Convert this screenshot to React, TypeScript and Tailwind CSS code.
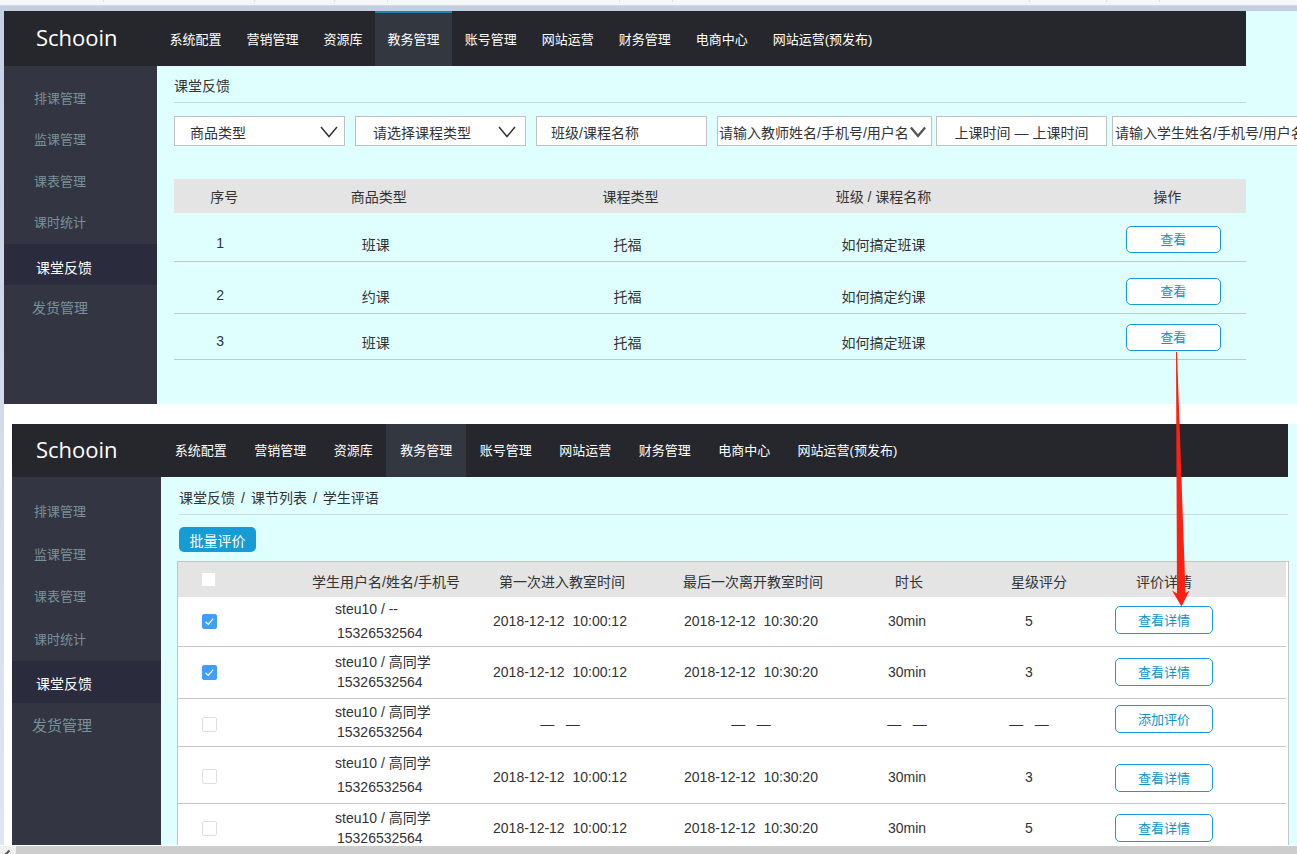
import { ReactNode } from "react";
import clsx from "clsx";

const NAV = [
  "系统配置",
  "营销管理",
  "资源库",
  "教务管理",
  "账号管理",
  "网站运营",
  "财务管理",
  "电商中心",
  "网站运营(预发布)",
];

const MENU = ["排课管理", "监课管理", "课表管理", "课时统计"];

const COURSES = [
  { id: 1, type: "班课", course: "托福", name: "如何搞定班课", height: "h-12" },
  { id: 2, type: "约课", course: "托福", name: "如何搞定约课", height: "h-[52px]" },
  { id: 3, type: "班课", course: "托福", name: "如何搞定班课", height: "h-[46px]" },
];

const EMPTY = "—   —";
const ENTER = "2018-12-12  10:00:12";
const LEAVE = "2018-12-12  10:30:20";

const STUDENTS = [
  { name: "--", checked: true, enter: ENTER, leave: LEAVE, time: "30min", stars: "5", action: "查看详情", size: "h-[49px] leading-6", cell: "", actionCell: "pb-0.5" },
  { name: "高同学", checked: true, enter: ENTER, leave: LEAVE, time: "30min", stars: "3", action: "查看详情", size: "h-[52px] leading-5", cell: "", actionCell: "" },
  { name: "高同学", checked: false, enter: EMPTY, leave: EMPTY, time: EMPTY, stars: EMPTY, action: "添加评价", size: "h-12 leading-5", cell: "pt-1", actionCell: "pb-1.5" },
  { name: "高同学", checked: false, enter: ENTER, leave: LEAVE, time: "30min", stars: "3", action: "查看详情", size: "h-[57px] leading-6", cell: "pt-1", actionCell: "pt-1.5" },
  { name: "高同学", checked: false, enter: ENTER, leave: LEAVE, time: "30min", stars: "5", action: "查看详情", size: "h-[50px] leading-5", cell: "", actionCell: "" },
];

function RulerStrip() {
  return (
    <div className="flex h-[11px] shrink-0 overflow-hidden border-b-[5px] border-[#c3cee0] bg-[#f5f6f8] shadow-[inset_0_-1px_0_#d6d9df]">
      {[104, 151, 80, 53, 232, 53, 357, 77, 53].map((width, i) => (
        <span key={i} className="h-0.5 shrink-0 border-r border-[#dcdee2]" style={{ width }} />
      ))}
    </div>
  );
}

interface HeaderProps {
  className: string;
  logoClass: string;
  navClass: string;
  activeClass: string;
}

function Header({ className, logoClass, navClass, activeClass }: HeaderProps) {
  return (
    <header className={clsx("flex bg-[#26272c] text-white", className)}>
      <div className={clsx("flex shrink-0 items-center pb-1 font-['Open_Sans',sans-serif] text-[22px] leading-none", logoClass)}>
        Schooin
      </div>
      <nav className={clsx("flex text-[13px]", navClass)}>
        {NAV.map((item) => (
          <a
            key={item}
            href="#"
            className={clsx(
              "flex flex-auto items-center justify-center whitespace-nowrap px-3 pt-0.5",
              item === "教务管理" && activeClass
            )}
          >
            {item}
          </a>
        ))}
      </nav>
    </header>
  );
}

interface SidebarProps {
  className: string;
  groupClass: string;
  activeClass: string;
  lastClass: string;
}

function Sidebar({ className, groupClass, activeClass, lastClass }: SidebarProps) {
  return (
    <aside className={clsx("shrink-0 bg-[#333642] text-[#78919a]", className)}>
      <div className={clsx("grid grid-rows-4 text-[13px]", groupClass)}>
        {MENU.map((item) => (
          <a key={item} href="#" className="flex items-center pt-px">
            {item}
          </a>
        ))}
      </div>
      <a href="#" className={clsx("flex items-center bg-[#2a2b3d] text-white", activeClass)}>
        课堂反馈
      </a>
      <a href="#" className={clsx("flex items-center", lastClass)}>
        发货管理
      </a>
    </aside>
  );
}

function Chevron({ className, bold }: { className: string; bold?: boolean }) {
  return (
    <svg
      viewBox="0 0 18 12"
      className={clsx("pointer-events-none absolute", className)}
      fill="none"
      stroke={bold ? "#555" : "#333"}
      strokeWidth={bold ? 2.6 : 1.5}
    >
      <path d="M1 1 L9 10.5 L17 1" />
    </svg>
  );
}

const fieldBox = "relative h-[30px] shrink-0 border border-[#c0c0c0] bg-white";
const fieldInput = "h-full w-full appearance-none bg-transparent pt-1 outline-none placeholder:text-[#333] placeholder:opacity-100";

function Filters() {
  return (
    <form className="mt-[13px] flex overflow-hidden text-sm">
      <div className={clsx(fieldBox, "mr-2.5 w-[171px]")}>
        <select aria-label="商品类型" className={clsx(fieldInput, "pl-[15px]")}>
          <option>商品类型</option>
        </select>
        <Chevron className="right-[6px] top-[9px] h-3 w-[18px]" />
      </div>
      <div className={clsx(fieldBox, "mr-2.5 w-[171px]")}>
        <select aria-label="课程类型" className={clsx(fieldInput, "pl-[17px]")}>
          <option>请选择课程类型</option>
        </select>
        <Chevron className="right-[9px] top-[9px] h-3 w-[18px]" />
      </div>
      <div className={clsx(fieldBox, "mr-2.5 w-[171px]")}>
        <input aria-label="班级/课程名称" placeholder="班级/课程名称" className={clsx(fieldInput, "pl-3.5")} />
      </div>
      <div className={clsx(fieldBox, "mr-1 w-[215px]")}>
        <select aria-label="教师" className={clsx(fieldInput, "pl-px")}>
          <option>请输入教师姓名/手机号/用户名</option>
        </select>
        <Chevron bold className="right-[5px] top-[9px] h-3 w-4" />
      </div>
      <div className={clsx(fieldBox, "mr-[5px] w-[171px]")}>
        <input aria-label="上课时间" placeholder="上课时间 — 上课时间" className={clsx(fieldInput, "text-center")} />
      </div>
      <div className={clsx(fieldBox, "w-[215px]")}>
        <input aria-label="学生" placeholder="请输入学生姓名/手机号/用户名" className={clsx(fieldInput, "pl-0.5")} />
      </div>
    </form>
  );
}

function OutlineButton({ className, children }: { className: string; children: ReactNode }) {
  return (
    <button
      type="button"
      className={clsx("rounded-[5px] border border-[#169bd5] bg-white pt-0.5 text-[13px] text-[#0a96cc]", className)}
    >
      {children}
    </button>
  );
}

function CourseTable() {
  return (
    <table className="mt-[33px] w-full table-fixed text-center text-sm">
      <thead>
        <tr className="h-[34px] bg-[#e4e4e4]">
          <th className="w-[9%] pl-1 pt-0.5 font-normal">序号</th>
          <th className="w-[20%] pl-0.5 pt-0.5 font-normal">商品类型</th>
          <th className="w-[27%] pl-0.5 pt-0.5 font-normal">课程类型</th>
          <th className="w-[20%] pl-1 pt-0.5 font-normal">班级 / 课程名称</th>
          <th className="pl-[100px] pt-0.5 font-normal">操作</th>
        </tr>
      </thead>
      <tbody>
        {COURSES.map((c) => (
          <tr key={c.id} className={clsx("border-b border-[#c4c8c8] align-bottom leading-5", c.height)}>
            <td className="pb-2 pr-1">{c.id}</td>
            <td className="pb-1.5 pr-1">{c.type}</td>
            <td className="pb-1.5 pr-1">{c.course}</td>
            <td className="pb-1.5 pl-1">{c.name}</td>
            <td className="pb-2 pl-28">
              <OutlineButton className="mx-auto block h-[27px] w-[95px]">查看</OutlineButton>
            </td>
          </tr>
        ))}
      </tbody>
    </table>
  );
}

function Tick({ label, defaultChecked }: { label: string; defaultChecked?: boolean }) {
  return (
    <label className="relative block size-[15px]">
      <input
        type="checkbox"
        aria-label={label}
        defaultChecked={defaultChecked}
        className="peer block size-full appearance-none rounded-[2px] border border-[#dedede] bg-white checked:border-[#409eff] checked:bg-[#409eff]"
      />
      <svg
        viewBox="0 0 15 15"
        className="pointer-events-none absolute inset-0 hidden peer-checked:block"
        fill="none"
        stroke="#fff"
        strokeWidth="1.2"
      >
        <path d="M3.5 7.8 L6.2 10.4 L11.2 4.6" />
      </svg>
    </label>
  );
}

function StudentTable() {
  return (
    <div className="mr-2 mt-[9px] border border-[#c4c4c4] bg-white pr-0.5">
      <table className="w-full table-fixed text-center text-sm">
        <thead>
          <tr className="h-[35px] bg-[#e4e4e4]">
            <th className="w-[120px] pl-6">
              <label className="block">
                <input type="checkbox" aria-label="全选" className="block size-[13px] appearance-none bg-white" />
              </label>
            </th>
            <th className="w-44 pt-1 font-normal">学生用户名/姓名/手机号</th>
            <th className="w-44 pt-1 font-normal">第一次进入教室时间</th>
            <th className="w-[206px] pt-1 font-normal">最后一次离开教室时间</th>
            <th className="w-[106px] pt-1 font-normal">时长</th>
            <th className="w-36 pl-2.5 pt-1 font-normal">星级评分</th>
            <th className="pr-16 pt-1 font-normal">评价详情</th>
          </tr>
        </thead>
        <tbody>
          {STUDENTS.map((s, i) => (
            <tr key={i} className={clsx("border-b border-[#c4c4c4]", s.size)}>
              <td className={clsx("pl-6", s.cell)}>
                <Tick label={`选择 ${i + 1}`} defaultChecked={s.checked} />
              </td>
              <td className="pl-[37px] text-left">
                <div>steu10 / {s.name}</div>
                <div className="pl-0.5">15326532564</div>
              </td>
              <td className={clsx("whitespace-pre pr-1", s.cell)}>{s.enter}</td>
              <td className={clsx("whitespace-pre pr-1", s.cell)}>{s.leave}</td>
              <td className={clsx("whitespace-pre pr-1", s.cell)}>{s.time}</td>
              <td className={clsx("whitespace-pre pr-2.5", s.cell)}>{s.stars}</td>
              <td className={clsx("pr-16", s.actionCell)}>
                <OutlineButton className="mx-auto block h-7 w-[98px]">{s.action}</OutlineButton>
              </td>
            </tr>
          ))}
        </tbody>
      </table>
    </div>
  );
}

function FlowArrow() {
  return (
    <svg
      viewBox="0 0 24 256"
      className="pointer-events-none absolute left-[1169px] top-[351px] h-64 w-6"
      fill="#ff2012"
    >
      <path d="M7 1 H8 L16.5 242 L20.5 239.5 L12.5 255.5 L3 239.5 L8 242.5 Z" />
    </svg>
  );
}

export default function App() {
  return (
    <div className="relative flex h-screen flex-col overflow-hidden bg-white font-['Liberation_Sans','Noto_Sans_CJK_SC',sans-serif] text-sm text-[#333]">
      <RulerStrip />
      <div className="flex min-h-0 flex-1">
        <div className="w-1 shrink-0 bg-linear-to-b from-[#c5d1e5] to-[#dce7f1]" />
        <div className="flex min-w-0 flex-1 flex-col gap-5">
          <section className="shrink-0 bg-[#dfffff]">
            <Header
              className="mr-[51px] h-[55px]"
              logoClass="w-[153px] pl-8"
              navClass="w-[728px] pt-0.5"
              activeClass="-mt-0.5 border-t-2 border-[#1a86b0] bg-[#333740]"
            />
            <div className="flex h-[338px]">
              <Sidebar
                className="w-[153px] pt-3"
                groupClass="h-[166px] pl-[30px]"
                activeClass="h-[41px] pl-8 pt-1.5"
                lastClass="h-[46px] pl-7"
              />
              <main className="min-w-0 flex-1 pl-[17px]">
                <h1 className="mr-[51px] flex h-[37px] items-center border-b border-[#cfd8d8] pt-1">课堂反馈</h1>
                <Filters />
                <div className="mr-[51px]">
                  <CourseTable />
                </div>
              </main>
            </div>
          </section>

          <section className="ml-2 flex min-h-0 flex-1 flex-col overflow-hidden bg-[#dfffff]">
            <Header
              className="mr-[9px] h-[53px] shrink-0"
              logoClass="w-[149px] pl-6"
              navClass="w-[750px]"
              activeClass="bg-[#333740]"
            />
            <div className="flex min-h-0 flex-1">
              <Sidebar
                className="w-[149px] pt-3.5"
                groupClass="h-[170px] pl-[22px]"
                activeClass="h-[42px] pl-6 pt-1"
                lastClass="h-[46px] pl-5 text-[15px]"
              />
              <main className="min-w-0 flex-1 pl-4">
                <div className="ml-0.5 mr-[9px]">
                  <h2 className="flex h-[38px] items-center gap-1.5 border-b border-[#cfd8d8] pt-1">
                    <a href="#">课堂反馈</a>/<a href="#">课节列表</a>/<span>学生评语</span>
                  </h2>
                  <button
                    type="button"
                    className="mt-3 block h-[25px] w-[77px] rounded-[5px] bg-[#169bd5] pt-0.5 text-sm text-white"
                  >
                    批量评价
                  </button>
                </div>
                <StudentTable />
              </main>
            </div>
          </section>
        </div>
      </div>
      <div className="flex h-[9px] shrink-0 border-t border-white bg-[#cdcdcd]">
        <div className="w-4 bg-[#f0f0f0]">
          <svg viewBox="0 0 16 8" className="block h-2 w-4" fill="none" stroke="#505050" strokeWidth="2">
            <path d="M9.5 4.5 L5 9" />
          </svg>
        </div>
      </div>
      <FlowArrow />
    </div>
  );
}
